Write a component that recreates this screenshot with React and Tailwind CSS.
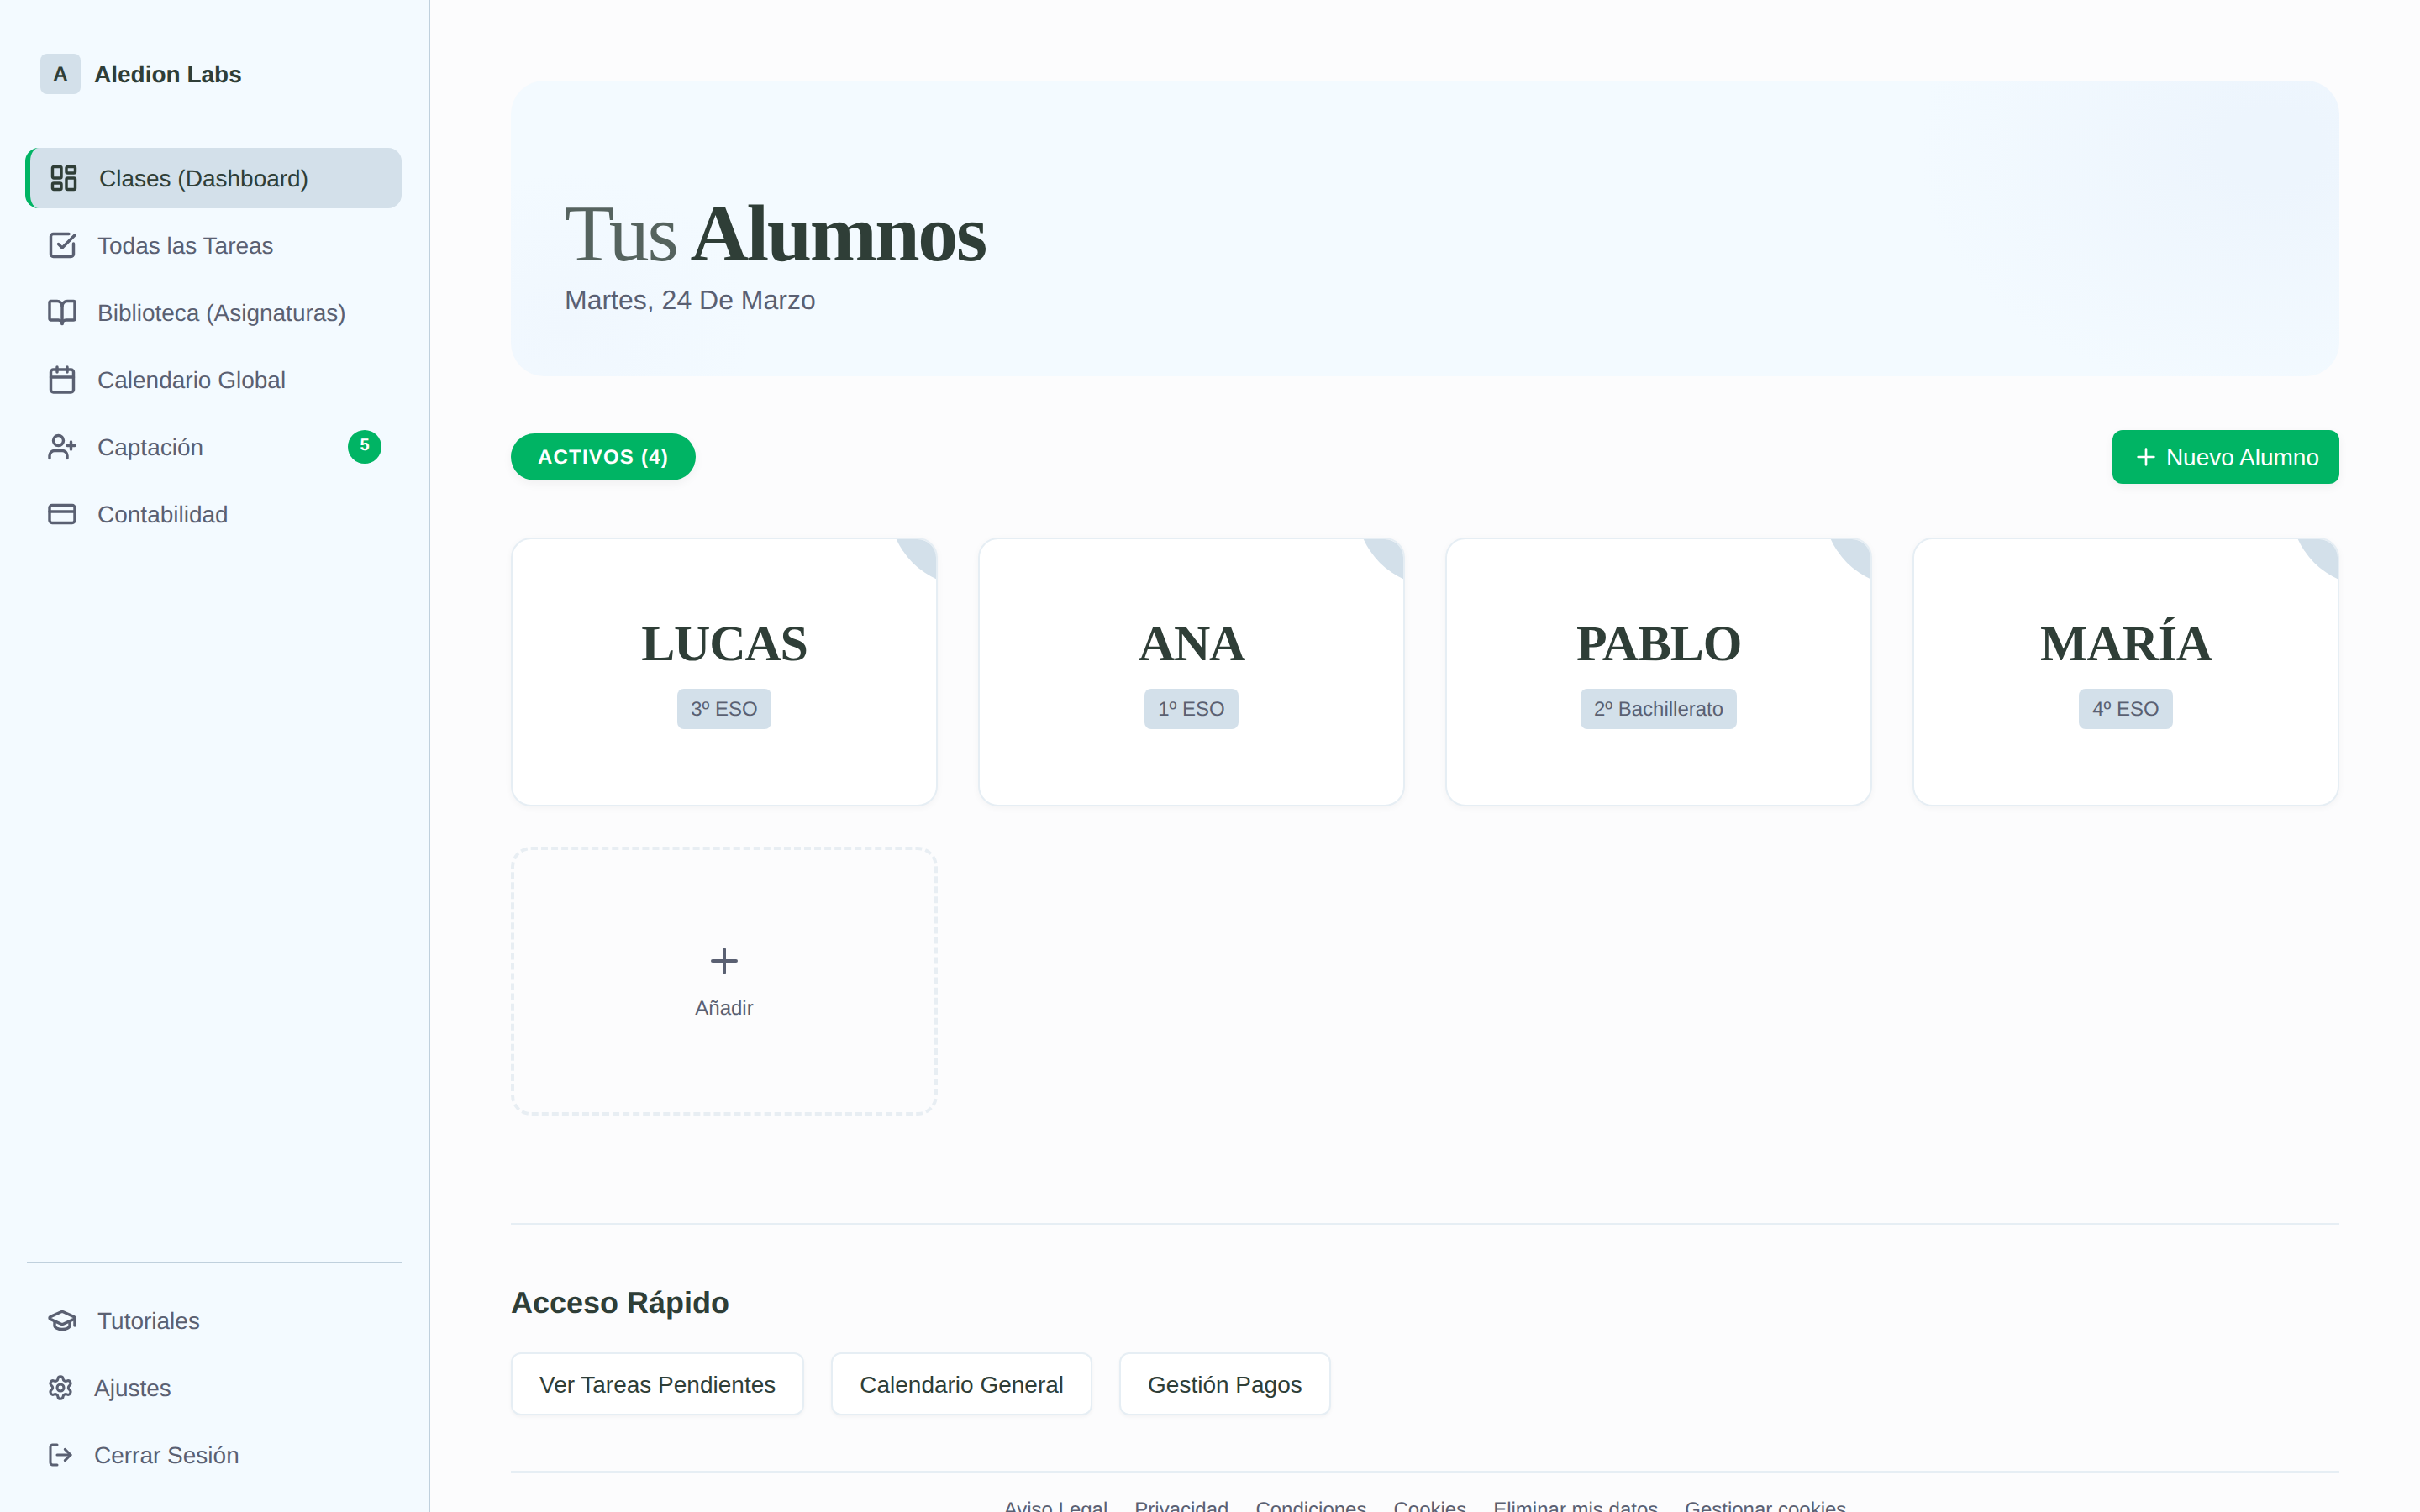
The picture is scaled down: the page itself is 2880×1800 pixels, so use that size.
import React from "react";
import { LayoutDashboard, SquareCheckBig, BookOpen, Calendar, UserPlus, CreditCard, GraduationCap, Settings, LogOut, Plus } from "lucide-react";

const nav = [
  { label: "Todas las Tareas", Icon: SquareCheckBig },
  { label: "Biblioteca (Asignaturas)", Icon: BookOpen },
  { label: "Calendario Global", Icon: Calendar },
  { label: "Captación", Icon: UserPlus, badge: "5" },
  { label: "Contabilidad", Icon: CreditCard },
];
const bottom = [
  { label: "Tutoriales", Icon: GraduationCap, size: 36 },
  { label: "Ajustes", Icon: Settings, size: 32 },
  { label: "Cerrar Sesión", Icon: LogOut, size: 32 },
];
const students = [
  { name: "LUCAS", level: "3º ESO" },
  { name: "ANA", level: "1º ESO" },
  { name: "PABLO", level: "2º Bachillerato" },
  { name: "MARÍA", level: "4º ESO" },
];
const quick = ["Ver Tareas Pendientes", "Calendario General", "Gestión Pagos"];
const legal = ["Aviso Legal", "Privacidad", "Condiciones", "Cookies", "Eliminar mis datos", "Gestionar cookies"];

function NavRow({ label, Icon, size = 36, badge }) {
  return (
    <a className="flex h-[72px] w-[448px] items-center gap-6 rounded-2xl pl-[26px] pr-6 text-[28px] text-[#5a6072]">
      <Icon size={size} strokeWidth={2.3} className="shrink-0" />
      <span className="flex-1 pt-[2px]">{label}</span>
      {badge && (
        <span className="flex h-10 w-10 items-center justify-center rounded-full bg-[#00b464] pb-[5px] text-[20px] font-bold text-white">{badge}</span>
      )}
    </a>
  );
}

export default function App() {
  return (
    <div className="flex h-[1800px] w-[2880px] overflow-hidden bg-[#fcfcfd] font-['Liberation_Sans',Arial,sans-serif] text-[#2f3e37] [text-rendering:geometricPrecision]">
      <aside className="flex h-full w-[512px] shrink-0 flex-col border-r-2 border-[#bfd0dd] bg-[#f3faff] pb-[32px] pl-[30px] pt-16">
        <div className="ml-[18px] flex items-center gap-4">
          <div className="flex h-12 w-12 items-center justify-center rounded-lg bg-[#d3e0ea] pt-[2px] text-[24px] font-bold">A</div>
          <span className="pt-[2px] text-[28px] font-bold">Aledion Labs</span>
        </div>
        <nav className="mt-16 flex flex-col gap-2">
          <a className="flex h-[72px] w-[448px] items-center gap-6 rounded-2xl border-l-[6px] border-[#00b464] bg-[#d3e0ea] pl-[22px] text-[28px] text-[#2f3e37]">
            <LayoutDashboard size={36} strokeWidth={2.3} className="shrink-0" />
            <span className="pt-[2px]">Clases (Dashboard)</span>
          </a>
          {nav.map((n) => (
            <NavRow key={n.label} {...n} />
          ))}
        </nav>
        <div className="mt-auto">
          <div className="ml-[2px] h-[2px] w-[446px] bg-[#bfd0dd]" />
          <div className="mt-8 flex flex-col gap-2">
            {bottom.map((n) => (
              <NavRow key={n.label} {...n} />
            ))}
          </div>
        </div>
      </aside>
      <main className="flex-1 px-24 pt-24">
        <section className="relative flex h-[352px] flex-col justify-end overflow-hidden rounded-[40px] bg-[#f3faff] bg-[radial-gradient(ellipse_420px_300px_at_2094px_81px,#edf5fd_0%,#edf5fd_15%,transparent_100%),radial-gradient(ellipse_220px_180px_at_67px_291px,#f0f7fe_0%,transparent_100%)] p-16 pb-[69px]">
          <h1 className="font-['Liberation_Serif',serif] text-[96px] leading-[96px] tracking-[-0.025em]">
            <span className="font-normal opacity-80">Tus </span>
            <strong className="-ml-[5.5px] font-bold">Alumnos</strong>
          </h1>
          <p className="mt-[9px] text-[32px] leading-[44px] text-[#5a6072]">Martes, 24 De Marzo</p>
        </section>

        <div className="mt-16 flex h-16 items-center justify-between">
          <span className="flex h-14 items-center rounded-full bg-[#00b464] px-8 pt-[2px] text-[24px] font-bold tracking-[0.05em] text-white shadow-[0_4px_12px_rgba(0,0,0,0.05)]">ACTIVOS (4)</span>
          <button className="flex h-16 items-center gap-2 rounded-xl bg-[#00b464] px-6 text-[28px] text-white shadow-[0_4px_12px_rgba(0,0,0,0.05)]">
            <Plus size={32} strokeWidth={2} />
            <span className="pt-[2px]">Nuevo Alumno</span>
          </button>
        </div>

        <div className="mt-16 grid grid-cols-4 gap-12">
          {students.map((s) => (
            <div key={s.name} className="relative flex h-80 flex-col items-center justify-center overflow-hidden rounded-3xl border-2 border-[#e6eef4] bg-white shadow-[0_2px_8px_rgba(0,0,0,0.04)]">
              <div className="absolute -right-[136px] -top-[136px] h-48 w-48 rounded-full bg-[#d3e0ea]" />
              <h2 className="font-['Liberation_Serif',serif] text-[60px] font-bold leading-[68px] tracking-[-0.02em]">{s.name}</h2>
              <span className="mt-5 rounded-lg bg-[#d3e0ea] px-4 pb-[7px] pt-[9px] text-[24px] leading-8 text-[#5a6072]">{s.level}</span>
            </div>
          ))}
          <div className="flex h-80 flex-col items-center justify-center rounded-3xl border-4 border-dashed border-[#e8eef3] text-[#5a6072]">
            <Plus size={48} strokeWidth={2} />
            <span className="-mb-[1px] mt-[17px] text-[24px] leading-8">Añadir</span>
          </div>
        </div>

        <div className="mt-32 border-t-2 border-[#e6eef4] pt-16">
          <h3 className="text-[36px] font-bold leading-[58px]">Acceso Rápido</h3>
          <div className="mt-[30px] flex gap-8">
            {quick.map((q) => (
              <button key={q} className="rounded-xl border-2 border-[#e6eef4] bg-white px-8 pb-[15px] pt-[17px] text-[28px] leading-[39px] shadow-[0_2px_4px_rgba(0,0,0,0.04)]">{q}</button>
            ))}
          </div>
        </div>

        <footer className="mt-[66px] border-t-2 border-[#e6eef4] pt-[29px]">
          <div className="flex justify-center gap-8 text-[24px] leading-8 text-[#5a6072]">
            {legal.map((l) => (
              <a key={l}>{l}</a>
            ))}
          </div>
        </footer>
      </main>
    </div>
  );
}
